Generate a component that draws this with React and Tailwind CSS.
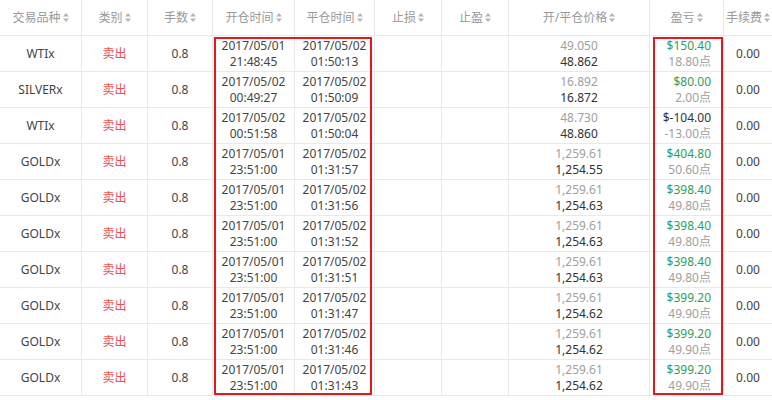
import React from "react";

const cols = "grid grid-cols-[82px_66px_65px_82px_80px_67px_67px_141px_74px_48px]";

function SortIcon() {
  return (
    <svg width="6" height="9" viewBox="0 0 6 9" className="ml-[2px] inline-block">
      <path d="M3 0 L6 3.5 L0 3.5 Z" fill="#b5b5b5" />
      <path d="M0 5.5 L6 5.5 L3 9 Z" fill="#b5b5b5" />
    </svg>
  );
}

const headers = ["交易品种", "类别", "手数", "开仓时间", "平仓时间", "止损", "止盈", "开/平仓价格", "盈亏", "手续费"];

const rows = [
  ["WTIx", "2017/05/01", "21:48:45", "2017/05/02", "01:50:13", "49.050", "48.862", "$150.40", "18.80点", true],
  ["SILVERx", "2017/05/02", "00:49:27", "2017/05/02", "01:50:09", "16.892", "16.872", "$80.00", "2.00点", true],
  ["WTIx", "2017/05/02", "00:51:58", "2017/05/02", "01:50:04", "48.730", "48.860", "$-104.00", "-13.00点", false],
  ["GOLDx", "2017/05/01", "23:51:00", "2017/05/02", "01:31:57", "1,259.61", "1,254.55", "$404.80", "50.60点", true],
  ["GOLDx", "2017/05/01", "23:51:00", "2017/05/02", "01:31:56", "1,259.61", "1,254.63", "$398.40", "49.80点", true],
  ["GOLDx", "2017/05/01", "23:51:00", "2017/05/02", "01:31:52", "1,259.61", "1,254.63", "$398.40", "49.80点", true],
  ["GOLDx", "2017/05/01", "23:51:00", "2017/05/02", "01:31:51", "1,259.61", "1,254.63", "$398.40", "49.80点", true],
  ["GOLDx", "2017/05/01", "23:51:00", "2017/05/02", "01:31:47", "1,259.61", "1,254.62", "$399.20", "49.90点", true],
  ["GOLDx", "2017/05/01", "23:51:00", "2017/05/02", "01:31:46", "1,259.61", "1,254.62", "$399.20", "49.90点", true],
  ["GOLDx", "2017/05/01", "23:51:00", "2017/05/02", "01:31:43", "1,259.61", "1,254.62", "$399.20", "49.90点", true],
];

const cell = "h-[36px] border-b border-r border-[#e9e9e9] flex items-center justify-center text-center";

export default function App() {
  return (
    <div
      className="relative w-[772px] h-[400px] bg-white overflow-hidden text-[12px] text-[#444]"
      style={{ fontFamily: '"Noto Sans", "Noto Sans CJK SC", sans-serif' }}
    >
      <div className={cols}>
        {headers.map((h, i) => (
          <div key={h} className={`${cell} text-[#999] ${i === 9 ? "border-r-0" : ""}`}>
            <span>{h}</span>
            <SortIcon />
          </div>
        ))}
      </div>
      {rows.map((r, idx) => (
        <div key={idx} className={cols}>
          <div className={cell}>{r[0]}</div>
          <div className={`${cell} text-[#f0504f]`}>卖出</div>
          <div className={cell}>0.8</div>
          <div className={`${cell} flex-col leading-[16px]`}>
            <span>{r[1]}</span>
            <span>{r[2]}</span>
          </div>
          <div className={`${cell} flex-col leading-[16px]`}>
            <span>{r[3]}</span>
            <span>{r[4]}</span>
          </div>
          <div className={cell}></div>
          <div className={cell}></div>
          <div className={`${cell} flex-col leading-[16px]`}>
            <span className="text-[#a0a0a0]">{r[5]}</span>
            <span className="text-[#333]">{r[6]}</span>
          </div>
          <div className={`${cell} flex-col items-end justify-center pr-[12px] leading-[16px]`}>
            <span className={r[9] ? "text-[#2f9e5c]" : "text-[#333]"}>{r[7]}</span>
            <span className="text-[#a0a0a0]">{r[8]}</span>
          </div>
          <div className={`${cell} border-r-0`}>0.00</div>
        </div>
      ))}
      <div className="absolute left-[214px] top-[37px] w-[158px] h-[358px] border-2 border-[#e0191c]"></div>
      <div className="absolute left-[653px] top-[37px] w-[70px] h-[358px] border-2 border-[#e0191c]"></div>
    </div>
  );
}
